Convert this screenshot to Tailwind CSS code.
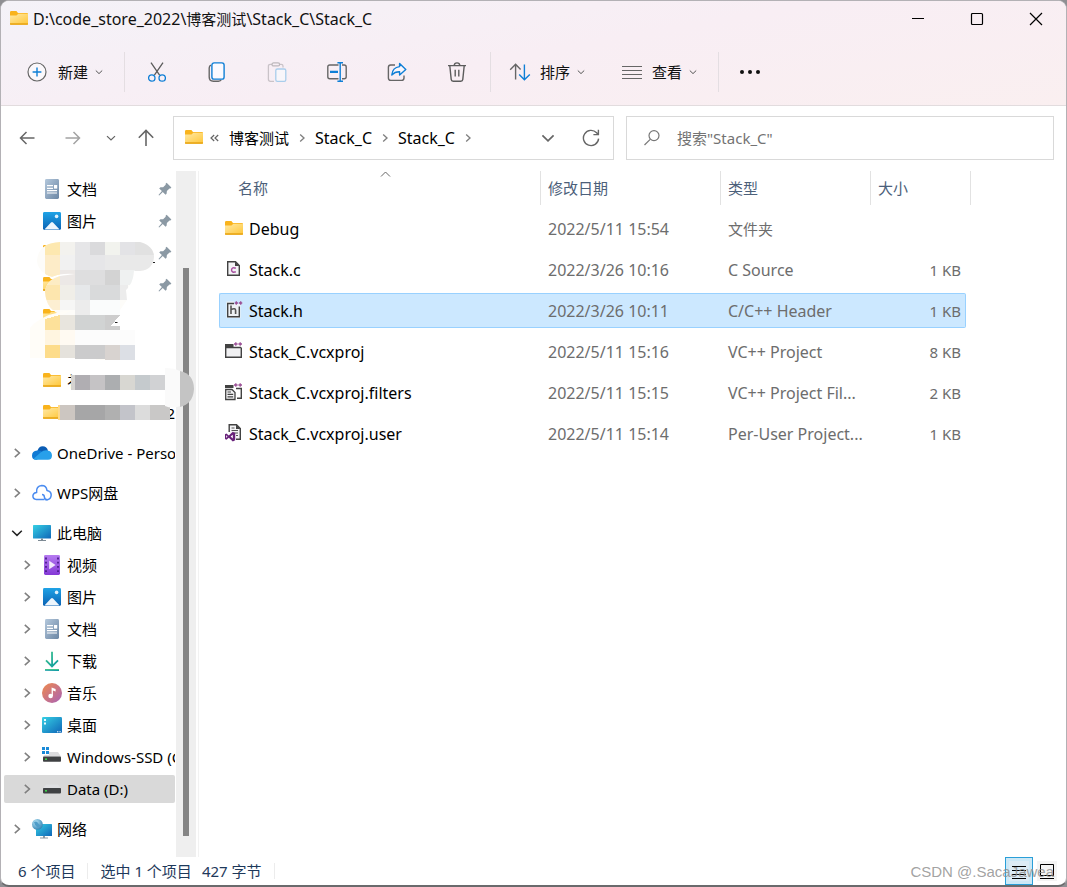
<!DOCTYPE html>
<html lang="zh-CN">
<head>
<meta charset="utf-8">
<meta name="viewport" content="width=device-width, initial-scale=1">
<title>Stack_C</title>
<script src="https://cdn.jsdelivr.net/npm/@tailwindcss/browser@4"></script>
</head>
<body class="bg-[#8f8f93] font-['Noto_Sans','Noto_Sans_CJK_SC',sans-serif] text-[15px] leading-5 text-[#111]">
<svg width="0" height="0" class="absolute" aria-hidden="true">
  <defs>
    <linearGradient id="gFolder" x1="0" y1="0" x2="1" y2="1"><stop offset="0" stop-color="#ffe9a6"/><stop offset="1" stop-color="#ffc83d"/></linearGradient>
    <linearGradient id="gDoc" x1="0" y1="0" x2="1" y2="1"><stop offset="0" stop-color="#b4c8dc"/><stop offset="1" stop-color="#6b86a4"/></linearGradient>
    <linearGradient id="gPic" x1="0" y1="0" x2="0" y2="1"><stop offset="0" stop-color="#1fa3e6"/><stop offset="1" stop-color="#0b62b4"/></linearGradient>
    <linearGradient id="gScreen" x1="0" y1="0" x2="1" y2="1"><stop offset="0" stop-color="#36d0e4"/><stop offset="1" stop-color="#0f66b8"/></linearGradient>
    <linearGradient id="gVideo" x1="0" y1="0" x2="0" y2="1"><stop offset="0" stop-color="#b57bf0"/><stop offset="1" stop-color="#8438d6"/></linearGradient>
    <linearGradient id="gMusic" x1="0" y1="0" x2="1" y2="1"><stop offset="0" stop-color="#f08a4b"/><stop offset="1" stop-color="#a861b8"/></linearGradient>
    <linearGradient id="gDown" x1="0" y1="0" x2="1" y2="1"><stop offset="0" stop-color="#3fc48c"/><stop offset="1" stop-color="#0c9ba0"/></linearGradient>
    <radialGradient id="gGlobe" cx=".35" cy=".3" r=".8"><stop offset="0" stop-color="#b4e2f4"/><stop offset="1" stop-color="#2a7db0"/></radialGradient>
    <symbol id="folder" viewBox="0 0 20 20"><path d="M1 3.4Q1 2 2.2 2H7.4L9 4H18Q19 4 19 5V14.5Q19 15.7 18 15.7H2Q1 15.7 1 14.5Z" fill="#f9b31c"/><path d="M1 6.6H7.5L9.3 4.8H19V14.6H1Z" fill="url(#gFolder)"/><path d="M1 14.2H19V15.2Q19 15.8 18 15.8H2Q1 15.8 1 15.2Z" fill="#e8a81c"/></symbol>
    <symbol id="doc" viewBox="0 0 20 20"><rect x="3" y="0" width="14" height="20" rx="1.4" fill="url(#gDoc)"/><path d="M5 6.7H11M5 9.3H11M5 11.6H15M5 14H15" stroke="#fff" stroke-width="1.2"/><rect x="12" y="6" width="3.2" height="3.6" fill="#fff"/></symbol>
    <symbol id="pic" viewBox="0 0 20 20"><rect x="1" y="1" width="18" height="18" rx="1.4" fill="url(#gPic)"/><path d="M2.4 18.4L9 11.6Q10 10.6 11 11.6L17.6 18.4Z" fill="#eef6fd"/><circle cx="14.6" cy="5.4" r="1.8" fill="#dff1fc"/></symbol>
    <symbol id="pin" viewBox="0 0 14 14"><path d="M8.6 .8L13.4 5.6L12.4 6.6L11.5 6.5L8.9 9.1L8.6 11.8L7.5 12.8L4.8 10L1.2 13.4L.5 12.9L3.9 9.1L1.2 6.4L2.4 5.3L5.1 5.2L7.7 2.7L7.6 1.8Z" fill="#8b99a4"/></symbol>
    <symbol id="right" viewBox="0 0 12 12"><path d="M3.8 1.8L8.4 6L3.8 10.2" fill="none" stroke="#808080" stroke-width="1.6"/></symbol>
    <symbol id="down" viewBox="0 0 12 12"><path d="M1.2 3.8L6 8.4L10.8 3.8" fill="none" stroke="currentColor" stroke-width="1.5"/></symbol>
    <symbol id="monitor" viewBox="0 0 20 20"><rect x="1" y="2" width="18" height="13.6" rx=".6" fill="url(#gScreen)"/><path d="M9 15.6H11V17H14V18H6V17H9Z" fill="#7d8a94"/></symbol>
    <symbol id="drive" viewBox="0 0 20 20"><path d="M4 5.4H16L19 9.4H1Z" fill="#dedfe1"/><rect x="1" y="9" width="18" height="5.4" rx=".8" fill="#3f4143"/><rect x="3" y="11" width="2" height="1.6" fill="#3bd34a"/></symbol>
    <symbol id="plus2" viewBox="0 0 8 4"><path d="M0 2H3.6M1.8 .2V3.8M4.4 2H8M6.2 .2V3.8" stroke="#9b4f96" stroke-width="1.3"/></symbol>
  </defs>
</svg>

<div class="flex min-h-screen flex-col overflow-hidden rounded-[9px] border border-b-2 border-[#b3b1b5] border-b-[#6a6a6c] bg-white">

  <header class="border-b border-[#e2dcde] bg-linear-[170deg] from-[#f4f2f8] via-[#f8eef4] to-[#faeff0]">
    <div class="flex h-9 items-center justify-between pl-2 pr-[23px]">
      <h1 class="flex items-center gap-1">
        <svg class="size-5" aria-hidden="true"><use href="#folder"/></svg>
        <span class="text-[16px]">D:\code_store_2022\<span class="text-[15px]">博客测试</span>\Stack_C\Stack_C</span>
      </h1>
      <div class="flex gap-[45px] text-black">
        <button type="button" aria-label="最小化"><svg class="size-[14px]" viewBox="0 0 14 14" stroke="currentColor" fill="none"><path d="M1 6.5H13" stroke-width="1.1"/></svg></button>
        <button type="button" aria-label="最大化"><svg class="size-[14px]" viewBox="0 0 14 14" stroke="currentColor" fill="none"><rect x="1.5" y="1.5" width="11" height="11" rx="1" stroke-width="1.2"/></svg></button>
        <button type="button" aria-label="关闭"><svg class="size-[14px]" viewBox="0 0 14 14" stroke="currentColor" fill="none"><path d="M1 1L13 13M13 1L1 13" stroke-width="1.2"/></svg></button>
      </div>
    </div>
    <div class="flex h-[68px] items-center pl-[26px] pt-[2px] text-[#555]">
      <button type="button" class="flex items-center gap-[11px]">
        <svg class="size-5" viewBox="0 0 20 20" fill="none"><circle cx="10" cy="10" r="9" stroke="#666" stroke-width="1.2" fill="#fbf8fb"/><path d="M10 5.6V14.4M5.6 10H14.4" stroke="#0f7fd6" stroke-width="1.4"/></svg>
        <span class="text-[#111]">新建</span>
        <svg class="-ml-1 size-2" aria-hidden="true"><use href="#down"/></svg>
      </button>
      <span class="ml-[21px] h-10 w-px bg-[#e4dee2]"></span>
      <div class="flex items-center gap-10 pl-[22px]">
        <button type="button" aria-label="剪切"><svg class="size-5" viewBox="0 0 20 20" fill="none" stroke-width="1.3"><path d="M4 .6L12.6 13.2M16 .6L7.4 13.2" stroke="#5c5c5c"/><circle cx="4.8" cy="16" r="3.2" stroke="#0f7fd6"/><circle cx="15.2" cy="16" r="3.2" stroke="#0f7fd6"/></svg></button>
        <button type="button" aria-label="复制"><svg class="size-5" viewBox="0 0 20 20" fill="none" stroke-width="1.4"><path d="M4 3.2Q2.2 3.8 2.2 6V15Q2.2 19.2 6.4 19.2H11.5Q13.6 19.2 14.2 17.8" stroke="#666"/><rect x="4.9" y=".9" width="12.2" height="16.2" rx="2.2" stroke="#0f7fd6" fill="#fbfaff"/></svg></button>
        <button type="button" aria-label="粘贴" disabled><svg class="size-5" viewBox="0 0 20 20" fill="none" stroke-width="1.3"><path d="M7 19.3H3.4Q1.4 19.3 1.4 17.3V4Q1.4 2.3 3.4 2.3H5M12.5 2.3H14.2Q16 2.3 16 4V5.5" stroke="#c9c3c8"/><rect x="5" y=".9" width="7.6" height="3" rx="1.5" stroke="#bdb8bc"/><rect x="8.8" y="7" width="10" height="12.3" rx="1.6" stroke="#a9cdeb" fill="#f8f6fa"/></svg></button>
        <button type="button" aria-label="重命名"><svg class="size-5" viewBox="0 0 20 20" fill="none" stroke-width="1.4"><path d="M11.5 3H2.8Q.8 3 .8 5V14.8Q.8 16.8 2.8 16.8H11.5M15 3H17.2Q19.2 3 19.2 5V14.8Q19.2 16.8 17.2 16.8H15" stroke="#666"/><path d="M10.4 .7H16M10.4 19.3H16M13.2 .7V19.3" stroke="#0f7fd6"/><path d="M3 9.9H11" stroke="#0f7fd6" stroke-width="2.2"/></svg></button>
        <button type="button" aria-label="共享"><svg class="size-5" viewBox="0 0 20 20" fill="none" stroke-width="1.4" stroke-linejoin="round"><path d="M8 3H3.6Q1.4 3 1.4 5.2V16Q1.4 18.4 3.8 18.4H14.6Q17 18.4 17 16V13.4" stroke="#666"/><path d="M12.6 1.4L18.8 7.4L12.6 13V9.8Q8 9.6 4.8 13Q5.4 5.4 12.6 4.6Z" stroke="#0f7fd6" fill="#fbf7fb"/></svg></button>
        <button type="button" aria-label="删除"><svg class="size-5" viewBox="0 0 20 20" fill="none" stroke="#5c5c5c" stroke-width="1.4"><path d="M1 3.6H19M7.2 3.4Q7.4 .9 10 .9T12.8 3.4M2.8 3.8L4.2 17.4Q4.4 19.2 6.2 19.2H13.8Q15.6 19.2 15.8 17.4L17.2 3.8M8.2 7.8V14.6M11.8 7.8V14.6"/></svg></button>
      </div>
      <span class="ml-[23px] h-10 w-px bg-[#e4dee2]"></span>
      <button type="button" class="ml-[18px] flex items-center gap-[9px]">
        <svg class="size-[22px]" viewBox="0 0 22 22" fill="none" stroke-width="1.4"><path d="M6.6 18.6V3.4M1.2 8.8L6.6 3.2L11.6 8.4" stroke="#666"/><path d="M15.4 3.4V18.6M10.2 13.4L15.4 18.8L20.8 13.4" stroke="#0f7fd6"/></svg>
        <span class="text-[#111]">排序</span>
        <svg class="-ml-[2px] size-2" aria-hidden="true"><use href="#down"/></svg>
      </button>
      <button type="button" class="ml-[37px] flex items-center gap-[10px]">
        <svg class="size-5" viewBox="0 0 20 20" stroke="#666" stroke-width="1.2"><path d="M0 4.5H20M0 8.5H20M0 12.5H20M0 16.5H20"/></svg>
        <span class="text-[#111]">查看</span>
        <svg class="-ml-[3px] size-2" aria-hidden="true"><use href="#down"/></svg>
      </button>
      <span class="ml-[21px] h-10 w-px bg-[#e4dee2]"></span>
      <button type="button" aria-label="更多" class="ml-5"><svg class="h-5 w-[22px]" viewBox="0 0 22 20" fill="#111"><circle cx="3" cy="10" r="2"/><circle cx="11" cy="10" r="2"/><circle cx="19" cy="10" r="2"/></svg></button>
    </div>
  </header>

  <div class="flex h-[59px] pr-3 pt-[10px] text-[#666]">
    <div class="flex h-11 w-[172px] shrink-0 items-center pl-[18px]">
      <button type="button" aria-label="后退"><svg class="h-5 w-4" viewBox="0 0 16 20" fill="none" stroke="currentColor" stroke-width="1.5"><path d="M15.5 10H1.5M7.5 4L1.5 10L7.5 16"/></svg></button>
      <button type="button" aria-label="前进" class="ml-[30px] text-[#a3a3a3]"><svg class="h-5 w-4" viewBox="0 0 16 20" fill="none" stroke="currentColor" stroke-width="1.5"><path d="M.5 10H14.5M8.5 4L14.5 10L8.5 16"/></svg></button>
      <button type="button" aria-label="最近" class="ml-[25px]"><svg class="size-[10px]" aria-hidden="true"><use href="#down"/></svg></button>
      <button type="button" aria-label="向上" class="ml-[22px]"><svg class="h-5 w-4" viewBox="0 0 16 20" fill="none" stroke="currentColor" stroke-width="1.6"><path d="M8 18V2.5M.8 9.8L8 2.5L15.2 9.8"/></svg></button>
    </div>
    <div class="flex h-11 w-[441px] shrink-0 items-center border border-[#d9d9d9] pl-[10px] pr-[13px]">
      <svg class="size-5 shrink-0" aria-hidden="true"><use href="#folder"/></svg>
      <svg class="ml-[6px] h-3 w-[9px] shrink-0" viewBox="0 0 9 12" fill="none" stroke="#666" stroke-width="1.2"><path d="M4.2 3L1 6L4.2 9M8.2 3L5 6L8.2 9"/></svg>
      <nav class="ml-[10px] flex flex-1 items-center gap-2 text-black" aria-label="路径">
        <a href="#">博客测试</a>
        <svg class="size-[10px]" aria-hidden="true"><use href="#right"/></svg>
        <a href="#" class="text-[16px]">Stack_C</a>
        <svg class="size-[10px]" aria-hidden="true"><use href="#right"/></svg>
        <a href="#" class="text-[16px]">Stack_C</a>
        <svg class="size-[10px]" aria-hidden="true"><use href="#right"/></svg>
      </nav>
      <button type="button" aria-label="展开路径"><svg class="size-[14px]" aria-hidden="true"><use href="#down"/></svg></button>
      <button type="button" aria-label="刷新" class="ml-[27px]"><svg class="size-[18px]" viewBox="0 0 18 18" fill="none" stroke="currentColor" stroke-width="1.4"><path d="M16.6 9.6A7.6 7.6 0 1 1 14.6 3.8L16 5.4M16.4 .8V5.6H11.4"/></svg></button>
    </div>
    <label class="ml-3 flex h-11 min-w-0 flex-1 items-center gap-4 border border-[#d9d9d9] pl-4">
      <svg class="size-[18px] shrink-0" viewBox="0 0 18 18" fill="none" stroke="#777" stroke-width="1.2"><circle cx="11" cy="6.6" r="5"/><path d="M7.200 10.400L1.500 16"/></svg>
      <input type="search" aria-label="搜索" placeholder='搜索"Stack_C"' class="min-w-0 flex-1 bg-transparent outline-none placeholder:text-[#737373]">
    </label>
  </div>

  <div class="flex flex-1">
    <nav class="relative w-[175px] shrink-0 pl-[3px] pr-px pt-2 whitespace-nowrap text-black" aria-label="导航窗格">
      <ul>
        <li><a href="#" class="flex h-8 items-center pl-[38px] pr-[3px]"><svg class="mr-[5px] size-5"><use href="#doc"/></svg><span class="flex-1">文档</span><svg class="size-[14px]"><use href="#pin"/></svg></a></li>
        <li><a href="#" class="flex h-8 items-center pl-[38px] pr-[3px]"><svg class="mr-[5px] size-5"><use href="#pic"/></svg><span class="flex-1">图片</span><svg class="size-[14px]"><use href="#pin"/></svg></a></li>
        <li><a href="#" aria-label="文件夹" class="flex h-8 items-center justify-between pl-[38px] pr-[3px]"><svg class="size-5"><use href="#folder"/></svg><svg class="size-[14px]"><use href="#pin"/></svg></a></li>
        <li><a href="#" aria-label="文件夹" class="flex h-8 items-center justify-between pl-[38px] pr-[3px]"><svg class="size-5"><use href="#folder"/></svg><svg class="size-[14px]"><use href="#pin"/></svg></a></li>
        <li><a href="#" aria-label="文件夹" class="flex h-8 items-center pl-[38px]"><svg class="size-5"><use href="#folder"/></svg></a></li>
        <li><a href="#" aria-label="文件夹" class="flex h-8 items-center pl-[38px]"></a></li>
        <li><a href="#" class="flex h-8 items-center pl-[38px]"><svg class="mr-[5px] size-5"><use href="#folder"/></svg>礻</a></li>
        <li><a href="#" class="flex h-8 items-center justify-between pl-[38px]"><svg class="size-5"><use href="#folder"/></svg>2</a></li>
      </ul>
      <ul class="mt-2 flex flex-col gap-2">
        <li><a href="#" class="flex h-8 items-center overflow-hidden"><span class="mr-[2px] flex w-[26px] shrink-0 justify-center"><svg class="size-3"><use href="#right"/></svg></span><svg class="mr-[5px] size-5 shrink-0" viewBox="0 0 20 20"><path d="M5.5 8Q6.4 3.2 10.8 3.2Q14.4 3.2 16 7.4L11 11Z" fill="#0a5cb4"/><path d="M0 12.8Q0 7.6 5.2 7.4Q8.4 7 12 10L5 16.8H4Q0 16.8 0 12.8Z" fill="#0f7ad4"/><path d="M8.6 9.6Q12 6.8 15.4 7.4Q20 8 20 12.6Q20 16.8 16 16.8H4Q2.4 16.8 1.6 15.8Z" fill="#28a0ea"/></svg>OneDrive - Personal</a></li>
        <li><a href="#" class="flex h-8 items-center"><span class="mr-[2px] flex w-[26px] justify-center"><svg class="size-3"><use href="#right"/></svg></span><svg class="mr-[5px] size-5" viewBox="0 0 20 20" fill="none" stroke="#4b8cf0" stroke-width="1.5"><path d="M12.5 16.6H4.4Q.8 16.2 .9 12.8Q1.2 9.6 4.6 9.4Q4 3 9.8 2.6Q14.2 2.6 15 7.4Q19.2 8.2 19.2 12Q19 16 15.4 16.7Q12.6 16.6 12.4 14T10 11.4"/><path d="M13.2 16.7H15.4"/></svg>WPS网盘</a></li>
        <li>
          <a href="#" class="flex h-8 items-center"><span class="mr-[2px] flex w-[26px] justify-center"><svg class="size-3 text-[#222]"><use href="#down"/></svg></span><svg class="mr-[5px] size-5"><use href="#monitor"/></svg>此电脑</a>
          <ul>
            <li><a href="#" class="flex h-8 items-center pl-[10px]"><span class="mr-[2px] flex w-[26px] justify-center"><svg class="size-3"><use href="#right"/></svg></span><svg class="mr-[5px] size-5" viewBox="0 0 20 20"><rect x="2" y="0" width="16" height="20" rx="1.4" fill="url(#gVideo)"/><path d="M4 2.6V18M16 2.6V18" stroke="#4a1d8c" stroke-width="1.8" stroke-dasharray="1.8 2.4"/><path d="M7.2 5.8L13.6 10L7.2 14.2Z" fill="#f2e8fc"/></svg>视频</a></li>
            <li><a href="#" class="flex h-8 items-center pl-[10px]"><span class="mr-[2px] flex w-[26px] justify-center"><svg class="size-3"><use href="#right"/></svg></span><svg class="mr-[5px] size-5"><use href="#pic"/></svg>图片</a></li>
            <li><a href="#" class="flex h-8 items-center pl-[10px]"><span class="mr-[2px] flex w-[26px] justify-center"><svg class="size-3"><use href="#right"/></svg></span><svg class="mr-[5px] size-5"><use href="#doc"/></svg>文档</a></li>
            <li><a href="#" class="flex h-8 items-center pl-[10px]"><span class="mr-[2px] flex w-[26px] justify-center"><svg class="size-3"><use href="#right"/></svg></span><svg class="mr-[5px] size-5" viewBox="0 0 20 20" fill="none" stroke="url(#gDown)" stroke-width="1.8"><path d="M10 .8L10.1 15M4 9.4L10 15.4L16 9.4"/><path d="M3 18.9L17 19"/></svg>下载</a></li>
            <li><a href="#" class="flex h-8 items-center pl-[10px]"><span class="mr-[2px] flex w-[26px] justify-center"><svg class="size-3"><use href="#right"/></svg></span><svg class="mr-[5px] size-5" viewBox="0 0 20 20"><circle cx="10" cy="10" r="10" fill="url(#gMusic)"/><circle cx="8.6" cy="13" r="2.3" fill="#fff"/><path d="M9.6 13V4.4L13.6 6V8.4L10.9 7.4V13Z" fill="#fff"/></svg>音乐</a></li>
            <li><a href="#" class="flex h-8 items-center pl-[10px]"><span class="mr-[2px] flex w-[26px] justify-center"><svg class="size-3"><use href="#right"/></svg></span><svg class="mr-[5px] size-5" viewBox="0 0 20 20"><rect x="0" y="2" width="20" height="16" rx="1.2" fill="url(#gScreen)"/><path d="M2 5H4M2 8.6H4" stroke="#e9fbff" stroke-width="2"/><path d="M15 16.8H16.4M17.4 16.8H18.8" stroke="#fff"/></svg>桌面</a></li>
            <li><a href="#" class="flex h-8 items-center overflow-hidden pl-[10px]"><span class="mr-[2px] flex w-[26px] shrink-0 justify-center"><svg class="size-3"><use href="#right"/></svg></span><svg class="mr-[5px] size-5 shrink-0" viewBox="0 0 20 20"><path d="M6 5H16L19 9.6H1Z" fill="#dcdcde"/><rect x="1" y="9.4" width="18" height="5.4" rx=".8" fill="#3f4143"/><rect x="3" y="11.4" width="2" height="1.6" fill="#3bd34a"/><path d="M0 0H7V8H0Z" fill="#fff"/><path d="M0 0H3V3H0ZM4 0H7V3H4ZM0 4H3V7H0ZM4 4H7V7H4Z" fill="#1a8ad8"/></svg>Windows-SSD (C:)</a></li>
            <li class="flex h-8 items-center"><a href="#" aria-current="page" class="flex h-7 flex-1 items-center rounded-[2px] bg-[#d9d9d9] pl-[10px]"><span class="mr-[2px] flex w-[26px] justify-center"><svg class="size-3"><use href="#right"/></svg></span><svg class="mr-[5px] size-5"><use href="#drive"/></svg>Data (D:)</a></li>
          </ul>
        </li>
        <li><a href="#" class="flex h-8 items-center"><span class="mr-[2px] flex w-[26px] justify-center"><svg class="size-3"><use href="#right"/></svg></span><svg class="mr-[5px] size-5" viewBox="0 0 20 20"><rect x="4" y="5" width="16" height="12" rx=".6" fill="url(#gScreen)"/><path d="M11 17H13V18.6H16V19.6H8V18.6H11Z" fill="#8b98a2"/><circle cx="5.4" cy="5.4" r="5.4" fill="url(#gGlobe)"/><path d="M2 3Q5 1.6 6 4T9 6Q7 9 5 8T2 3Z" fill="#4f9cc8"/></svg>网络</a></li>
      </ul>

      <!-- Pixelated redaction over private folder names -->
      <svg class="absolute left-0 top-[70px] z-10 h-[190px] w-[196px]" viewBox="1 235 196 190" aria-hidden="true">
        <defs>
          <clipPath id="c1"><path d="M37 261Q38 243 60 242H140Q154 246 154 257Q153 270 140 271H134Q133 284 126 290L127 300L120 310V315H62Q46 310 45 292Q46 280 60 276L75 274Q60 273 52 277Q38 272 37 261Z"/></clipPath>
        </defs>
        <g clip-path="url(#c1)" shape-rendering="crispEdges">
          <path d="M37 242H160V316H37Z" fill="#fdfcf9"/>
          <path d="M45 242h15v13h-15z" fill="#fde8b0"/><path d="M60 242h15v13h-15z" fill="#f3f2ee"/><path d="M75 242h15v13h-15z" fill="#e6e6e8"/><path d="M90 242h15v13h-15z" fill="#dadadc"/><path d="M105 242h15v13h-15z" fill="#f2f3ee"/><path d="M120 242h15v13h-15z" fill="#e3e3e6"/><path d="M135 242h20v13h-20z" fill="#e1e1e1"/>
          <path d="M45 255h15v21h-15z" fill="#fdecc8"/><path d="M60 255h15v15h-15z" fill="#f1f1f1"/><path d="M75 255h30v15h-30z" fill="#e6e6e8"/><path d="M105 255h50v16h-50z" fill="#e9e9e9"/>
          <path d="M45 274h15v11h-15z" fill="#fdecc4"/><path d="M60 270h15v15h-15z" fill="#ece8e6"/><path d="M75 270h30v15h-30z" fill="#dededf"/><path d="M105 270h15v15h-15z" fill="#d3d3d3"/><path d="M120 270h15v15h-15z" fill="#eff1f1"/>
          <path d="M45 285h15v15h-15z" fill="#fde6ae"/><path d="M60 285h15v15h-15z" fill="#f0eee8"/><path d="M75 285h15v15h-15z" fill="#e6e8ea"/><path d="M90 285h30v15h-30z" fill="#d9dadb"/><path d="M120 285h8v15h-8z" fill="#ececec"/>
          <path d="M45 300h15v10h-15z" fill="#fdefd2"/><path d="M60 300h15v10h-15z" fill="#f6f6f5"/><path d="M75 300h15v15h-15z" fill="#ececec"/><path d="M90 300h30v15h-30z" fill="#fafcfc"/>
        </g>
        <path d="M30 328Q40 316 60 312L72 310L60 316V345H135V360H96V358H30Z" fill="#fffdf8"/>
        <g shape-rendering="crispEdges">
          <path d="M45 319l15-4v15h-15z" fill="#fde19a"/><path d="M60 315h15v15h-15z" fill="#e8e5de"/><path d="M75 315h30v15h-30z" fill="#d1d3d3"/><path d="M105 315h15l-9 11h9v4h-15z" fill="#cdcdcd"/>
          <path d="M45 330h15v15h-15z" fill="#fff5e0"/><path d="M60 330h15v15h-15z" fill="#fffaf2"/><path d="M75 330h60v15h-60z" fill="#fcfcfc"/>
          <path d="M45 345h15v13h-15z" fill="#fddc8a"/><path d="M60 345h15v13h-15z" fill="#e5e2dc"/><path d="M75 345h30v14h-30z" fill="#cbcbcc"/><path d="M105 345h15v15h-15z" fill="#d8d3d0"/><path d="M120 345h15v15h-15z" fill="#dcdfe5"/>
          <path d="M71 375h4v15h-4z" fill="#d5d3d0"/><path d="M75 375h15v15h-15z" fill="#b0aeb2"/><path d="M90 375h15v15h-15z" fill="#c5c3c5"/><path d="M105 375h15v15h-15z" fill="#acaeb0"/><path d="M120 375h15v15h-15z" fill="#d8d7d2"/><path d="M135 375h15v15h-15z" fill="#c5cacd"/><path d="M150 375h15v15h-15z" fill="#d1d2d4"/>
          <path d="M75 390h90v2h-90z" fill="#fff"/>
          <path d="M58 405h2v15h-2z" fill="#fdd88a"/><path d="M60 405h15v15h-15z" fill="#ccc6c1"/><path d="M75 405h30v15h-30z" fill="#a6a6a7"/><path d="M105 405h15v15h-15z" fill="#b0b0b0"/><path d="M120 405h15v15h-15z" fill="#c3c4ca"/><path d="M135 405h15v15h-15z" fill="#dcdcdc"/><path d="M150 405h20v15h-20z" fill="#c9c8c7"/>
        </g>
        <path d="M165 368Q174 368 180 371V406Q172 409 165 406Z" fill="#fafafa"/>
        <path d="M180 371Q194 374 194 389Q193 404 180 407Z" fill="#c4c4c4"/>
        <path d="M153 262.5H155M115 322.5H117.500" stroke="#222"/>
      </svg>
    </nav>

    <div class="mt-[6px] flex w-5 shrink-0 justify-center bg-[#efefef] pb-[21px] pt-[97px]"><div class="w-[6px] bg-[#858585]"></div></div>
    <div class="ml-[2px] mt-[6px] w-px shrink-0 bg-[#f2f2f2]"></div>

    <main class="min-w-0 flex-1 pl-5">
      <table class="w-[752px] table-fixed border-separate border-spacing-x-0 border-spacing-y-[6px] text-[16px] text-[#6d6d6d]">
        <colgroup><col class="w-[322px]"><col class="w-[180px]"><col class="w-[150px]"><col class="w-[95px]"><col class="w-[5px]"></colgroup>
        <thead>
          <tr class="h-[34px] text-left text-[15px] text-[#4c607a]">
            <th class="relative border-r border-[#e2e2e2] pl-[19px] font-normal">名称<svg class="absolute left-[161px] top-0 h-[7px] w-[11px]" viewBox="0 0 11 7" fill="none" stroke="#666"><path d="M1 5.500L5.500 1L10 5.500"/></svg></th>
            <th class="border-r border-[#e2e2e2] pl-[7px] font-normal">修改日期</th>
            <th class="border-r border-[#e2e2e2] pl-[7px] font-normal">类型</th>
            <th class="pl-[7px] font-normal">大小</th>
            <th class="border-r border-[#e2e2e2]"></th>
          </tr>
        </thead>
        <tbody>
          <tr class="h-[35px]">
            <td class="pl-[5px] text-black"><span class="flex items-center gap-[5px]"><svg class="size-5"><use href="#folder"/></svg>Debug</span></td>
            <td class="pl-[7px]">2022/5/11 15:54</td><td class="pl-[7px] text-[15px]">文件夹</td><td></td><td></td>
          </tr>
          <tr class="h-[35px]">
            <td class="pl-[5px] text-black"><span class="flex items-center gap-[5px]"><svg class="size-5" viewBox="0 0 20 20"><path d="M3.700 1.700H11.500L15.300 5.500V15.300H3.700Z" fill="#f3f3f5" stroke="#424242" stroke-width="1.4"/><path d="M11 1.500V6H15.500Z" fill="#424242"/><path d="M11.800 8.200Q8 6.600 7.500 10Q8 13.200 11.800 11.800" fill="none" stroke="#a64f9f" stroke-width="1.500"/></svg>Stack.c</span></td>
            <td class="pl-[7px]">2022/3/26 10:16</td><td class="pl-[7px]">C Source</td><td class="pr-[5px] text-right text-[15px]">1 KB</td><td></td>
          </tr>
          <tr class="h-[35px]" aria-selected="true">
            <td class="rounded-l-[2px] border-y border-l border-[#99d1ff] bg-[#cce8ff] pl-1 text-black"><span class="flex items-center gap-[5px]"><svg class="size-5" viewBox="0 0 20 20"><path d="M2.500 .500H10V3H16.500V17H2.500Z" fill="#eef1f4"/><path d="M10 2.500H3.700V15.800H15.300V5.500" fill="none" stroke="#424242" stroke-width="1.4"/><path d="M7 4.500V13M7 8.500Q11.600 6.500 11.600 9.500V13" fill="none" stroke="#555" stroke-width="1.600"/><use href="#plus2" x="10.500" y="0" width="8" height="4"/></svg>Stack.h</span></td>
            <td class="border-y border-[#99d1ff] bg-[#cce8ff] pl-[7px]">2022/3/26 10:11</td><td class="border-y border-[#99d1ff] bg-[#cce8ff] pl-[7px]">C/C++ Header</td><td class="rounded-r-[2px] border-y border-r border-[#99d1ff] bg-[#cce8ff] pr-1 text-right text-[15px]">1 KB</td><td></td>
          </tr>
          <tr class="h-[35px]">
            <td class="pl-[5px] text-black"><span class="flex items-center gap-[5px]"><svg class="size-5" viewBox="0 0 20 20"><path d="M1.700 3H10V6H17.300V15.300H1.700Z" fill="#f0f0f2"/><path d="M1.700 5V15.300H17.300V5.500" fill="none" stroke="#424242" stroke-width="1.4"/><path d="M1 2H9.500V4.800H17V6.200H1Z" fill="#424242"/><use href="#plus2" x="10" y="0" width="8" height="4"/></svg>Stack_C.vcxproj</span></td>
            <td class="pl-[7px]">2022/5/11 15:16</td><td class="pl-[7px]">VC++ Project</td><td class="pr-[5px] text-right text-[15px]">8 KB</td><td></td>
          </tr>
          <tr class="h-[35px]">
            <td class="pl-[5px] text-black"><span class="flex items-center gap-[5px]"><svg class="size-5" viewBox="0 0 20 20"><path d="M1 2H9.500V5H1Z" fill="#424242"/><path d="M12 5.500H17.300V15.300H13" fill="none" stroke="#424242" stroke-width="1.4"/><path d="M1.700 6.500H8L11 9.500V16.500H1.700Z" fill="#f4f4f6" stroke="#424242" stroke-width="1.3"/><path d="M3.500 9H7M3.500 11.400H9.200M3.500 13.800H9.200" stroke="#424242" stroke-width="1.2"/><use href="#plus2" x="10" y="0" width="8" height="4"/></svg>Stack_C.vcxproj.filters</span></td>
            <td class="pl-[7px]">2022/5/11 15:15</td><td class="pl-[7px]">VC++ Project Fil...</td><td class="pr-[5px] text-right text-[15px]">2 KB</td><td></td>
          </tr>
          <tr class="h-[35px]">
            <td class="pl-[5px] text-black"><span class="flex items-center gap-[5px]"><svg class="size-5" viewBox="0 1 20 20"><path d="M5.200 9V1.700H12.500L16.300 5.500V16.300H12" fill="#f4f4f6" stroke="#424242" stroke-width="1.4"/><path d="M12 1.500V6H16.500Z" fill="#424242"/><path d="M7.500 5H10.500M7.500 7.500H14M10 10H14M12 12.500H14" stroke="#555" stroke-width="1.2"/><path d="M8.800 8.800L11.200 10V17.200L8.800 18.400L4.800 14.800L2.400 16.800L1 16V11.200L2.400 10.500L4.800 12.500ZM8.800 11.800L6.600 13.600L8.800 15.400ZM2.200 12.300V14.900L3.500 13.600Z" fill="#68217a" fill-rule="evenodd"/></svg>Stack_C.vcxproj.user</span></td>
            <td class="pl-[7px]">2022/5/11 15:14</td><td class="pl-[7px]">Per-User Project...</td><td class="pr-[5px] text-right text-[15px]">1 KB</td><td></td>
          </tr>
        </tbody>
      </table>
    </main>
  </div>

  <footer class="relative flex h-7 items-center pl-[17px] pr-[9px] text-[#1e395b]">
    <span>6 个项目</span>
    <span class="ml-3 h-4 w-px bg-[#ececec]"></span>
    <span class="ml-3">选中 1 个项目</span>
    <span class="ml-[10px]">427 字节</span>
    <span class="ml-3 h-4 w-px bg-[#ececec]"></span>
    <div class="ml-auto flex items-center text-black">
      <button type="button" aria-label="详细信息" class="flex h-7 w-7 items-center justify-center border border-[#2a9fd8] bg-[#cce8f6]"><svg class="size-5 bg-[#dcebf5]" viewBox="0 0 20 20" stroke="currentColor"><path d="M3 5.500H17M3 9.500H17M3 13.500H17M3 17.500H17"/></svg></button>
      <button type="button" aria-label="大图标" class="ml-1 flex h-7 w-5 items-center justify-center"><svg class="size-5 bg-[#f4f4f4]" viewBox="0 0 20 20" stroke="currentColor" fill="none"><path d="M3.500 3.500H16.500V14.500H3.500ZM3 17.500H17"/></svg></button>
    </div>
    <span class="pointer-events-none absolute right-3 top-[5px] font-['Liberation_Sans',sans-serif] text-[15px] text-[#8a8a8a]/80">CSDN @.SacaJawea</span>
  </footer>
</div>
</body>
</html>
